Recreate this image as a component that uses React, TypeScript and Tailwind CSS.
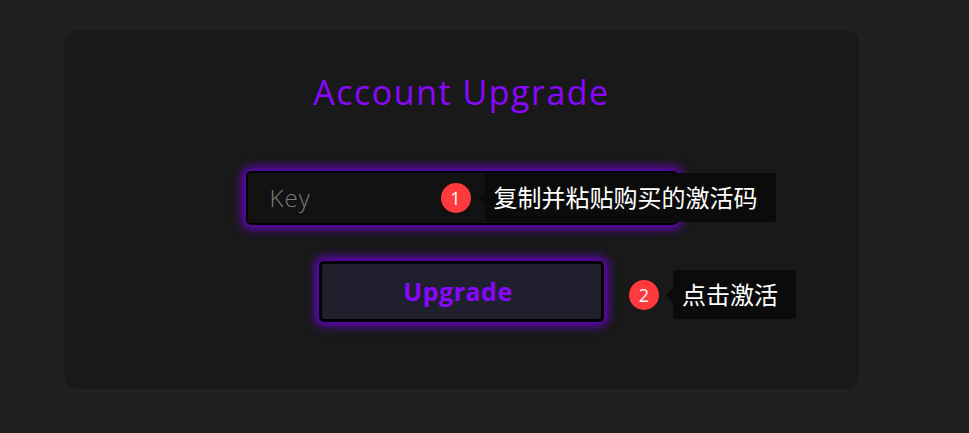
import React from 'react';

const font = { fontFamily: '"Open Sans", "Noto Sans CJK SC", sans-serif' };

function Hint({ n, text }: { n: number; text: string }) {
    return (
        <div className="flex items-center">
            <div className="w-[30px] h-[30px] rounded-full bg-[#fe3a3d] text-white text-[18px] leading-none flex items-center justify-center">
                {n}
            </div>
            <div className="ml-[7px] w-0 h-0 border-y-[7px] border-y-transparent border-r-[7px] border-r-[#0b0b0b]" />
            <div className="bg-[#0b0b0b] rounded-[3px] h-[49px] pl-[9px] pr-[18px] flex items-center text-white text-[24px] leading-none whitespace-nowrap">
                {text}
            </div>
        </div>
    );
}

export default function App() {
    return (
        <div className="min-h-[433px] w-full bg-[#202020] pt-[30px] pl-[64px]" style={font}>
            <div className="w-[795px] h-[359px] rounded-[14px] bg-[#191919] flex flex-col items-center">
                {/* Title */}
                <h1 className="mt-[42px] h-[40px] leading-[40px] text-[34px] text-[#8a07ff] tracking-[1.5px]">
                    Account Upgrade
                </h1>

                {/* Key input */}
                <div className="relative mt-[59px]">
                    <div className="w-[432px] h-[54px] rounded-[5px] bg-[#121212] border-2 border-black shadow-[0_0_10px_4px_rgba(115,0,225,0.85)] flex items-center pl-[22px]">
                        <span className="text-[24px] text-[#7b7b7b] font-light tracking-[1px]">Key</span>
                    </div>
                    <div className="absolute left-[195px] top-[2px]">
                        <Hint n={1} text="复制并粘贴购买的激活码" />
                    </div>
                </div>

                {/* Upgrade button */}
                <div className="relative mt-[36px]">
                    <button className="w-[285px] h-[61px] pr-[7px] rounded-[5px] bg-[#1f1f2e] border-[3px] border-black shadow-[0_0_10px_4px_rgba(115,0,225,0.85)] text-[25px] font-bold tracking-[0.5px] text-[#8a07ff]">
                        Upgrade
                    </button>
                    <div className="absolute left-[310px] top-[9px]">
                        <Hint n={2} text="点击激活" />
                    </div>
                </div>
            </div>
        </div>
    );
}
